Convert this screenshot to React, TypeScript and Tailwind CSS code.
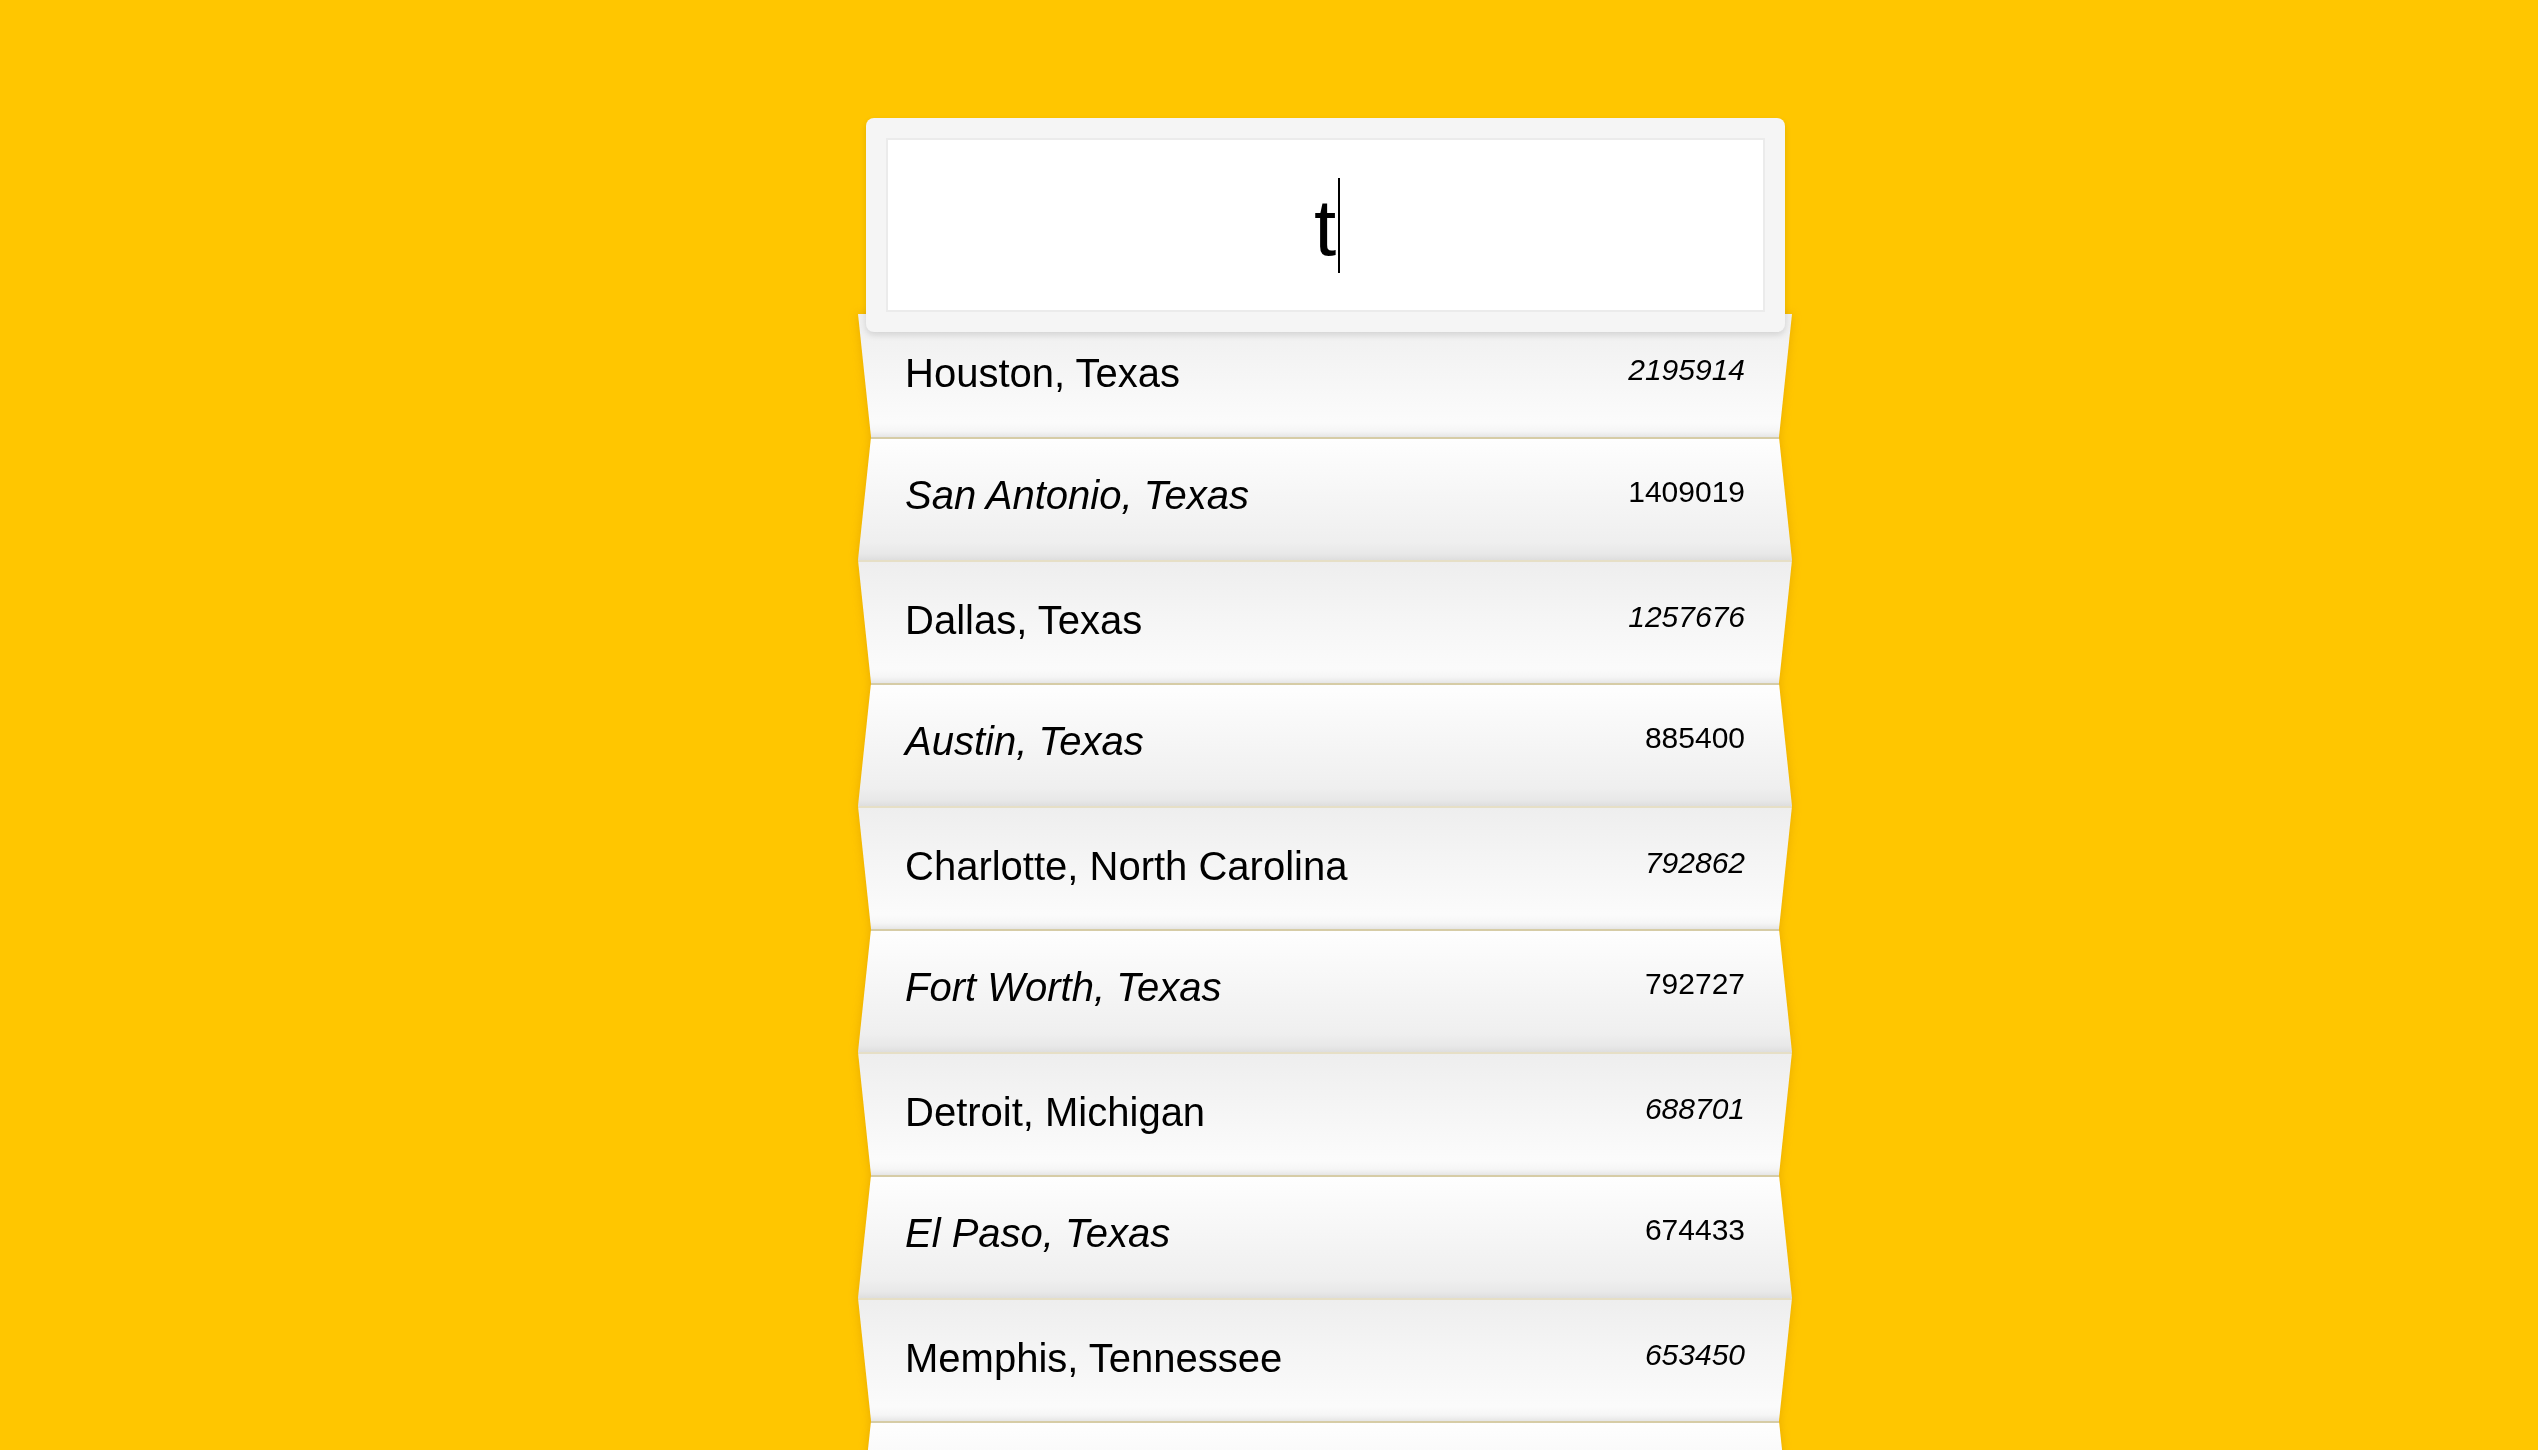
import React from "react";

type City = { name: string; pop: string };

const cities: City[] = [
  { name: "Houston, Texas", pop: "2195914" },
  { name: "San Antonio, Texas", pop: "1409019" },
  { name: "Dallas, Texas", pop: "1257676" },
  { name: "Austin, Texas", pop: "885400" },
  { name: "Charlotte, North Carolina", pop: "792862" },
  { name: "Fort Worth, Texas", pop: "792727" },
  { name: "Detroit, Michigan", pop: "688701" },
  { name: "El Paso, Texas", pop: "674433" },
  { name: "Memphis, Tennessee", pop: "653450" },
  { name: "Boston, Massachusetts", pop: "645966" },
];

function Row({ city, index }: { city: City; index: number }) {
  const odd = index % 2 === 0; // first, third, ... rows: wide top, narrow bottom
  const base =
    "flex items-center justify-between h-[123px] px-[47px] text-black";
  const shapeOdd =
    "pb-[5px] [clip-path:polygon(0_0,100%_0,calc(100%_-_13px)_100%,13px_100%)] bg-[linear-gradient(to_bottom,#eeeeee_0%,#f5f5f5_45%,#fbfbfb_88%,#f6f6f6_95%,#e6e6e6_100%)]";
  const shapeEven =
    "pb-[9px] [clip-path:polygon(13px_0,calc(100%_-_13px)_0,100%_100%,0_100%)] bg-[linear-gradient(to_bottom,#fefefe_0%,#f7f7f7_40%,#efefef_85%,#e8e8e8_95%,#dedede_100%)]";
  const border =
    index === 0
      ? ""
      : odd
      ? "border-t-2 border-[#e6dfc6]"
      : "border-t-2 border-[#d6cca6]";
  return (
    <div className={`${base} ${odd ? shapeOdd : shapeEven} ${border}`}>
      <span className={`text-[40px] leading-none ${odd ? "not-italic" : "italic"}`}>
        {city.name}
      </span>
      <span className={`text-[30px] leading-none mb-[6px] ${odd ? "italic" : "not-italic"}`}>
        {city.pop}
      </span>
    </div>
  );
}

export default function App() {
  return (
    <div className="min-h-screen bg-[#ffc600] font-['Liberation_Sans',Arial,Helvetica,sans-serif] overflow-hidden">
      <div className="flex justify-center pl-[112px] pt-[118px]">
        <div className="w-[934px] flex flex-col items-center">
          <div className="relative z-10 w-[919px] h-[214px] rounded-[8px] bg-[#f5f5f5] p-[20px] shadow-[0_3px_6px_rgba(0,0,0,0.12)]">
            <div className="h-full w-full bg-white border-2 border-[#ebebeb] flex items-center justify-center pt-[6px]">
              <span className="relative inline-block text-[80px] leading-none text-black">
                t
                <span className="absolute left-full ml-[2px] top-[-10px] h-[95px] w-[2px] bg-black" />
              </span>
            </div>
          </div>
          <div className="w-[934px] mt-[-18px] drop-shadow-[0_0_5px_rgba(190,120,0,0.35)]">
            {cities.map((c, i) => (
              <Row key={c.name} city={c} index={i} />
            ))}
          </div>
        </div>
      </div>
    </div>
  );
}
